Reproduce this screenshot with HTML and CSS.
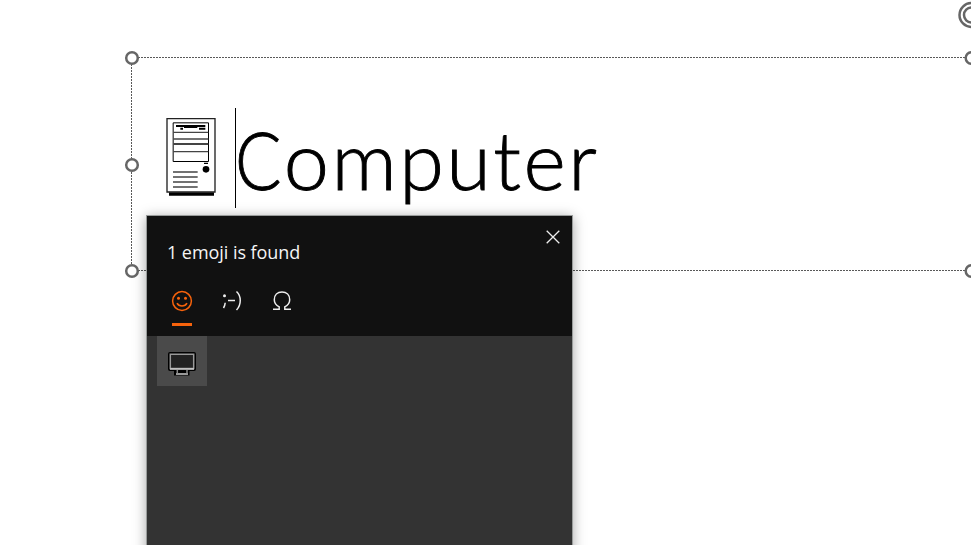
FILE: index.html
```html
<!DOCTYPE html>
<html lang="en">
<head>
<meta charset="utf-8">
<title>Computer</title>
<link rel="stylesheet" href="styles.css">
</head>
<body>
<main class="slide">
  <svg class="selection" width="971" height="545" viewBox="0 0 971 545" aria-hidden="true">
    <path class="outline" d="M132 57.5H971M131.500 58V270M132 270.500H971"/>
    <g class="handles">
      <circle cx="132" cy="58" r="5.800"/>
      <circle cx="132" cy="165" r="5.800"/>
      <circle cx="132" cy="271" r="5.800"/>
      <circle cx="971.500" cy="58" r="5.800"/>
      <circle cx="971.500" cy="271" r="5.800"/>
      <circle cx="971.500" cy="15" r="12"/>
      <circle cx="971.500" cy="15" r="7.500"/>
    </g>
  </svg>
  <section class="title">
    <svg class="tower" width="66" height="100" viewBox="48 24 198 300" aria-hidden="true">
      <path d="M57 277H192V287H57Z"/>
      <path class="case" d="M51 56H195V276H51Z"/>
      <path class="bay" d="M69.500 68.500H175.500V184.500H69.500Z"/>
      <path class="rule" d="M70 97H175M70 117H175M70 155H175M69 216H143M69 231H143M69 246H143M69 261H143"/>
      <path class="rule thick" d="M70 132H175"/>
      <path d="M78 75H166V81H142V84H102V81H78ZM91 83H99V89H91ZM147 83H166V89H147ZM162 188H174V192H162Z"/>
      <circle cx="168" cy="208" r="10"/>
    </svg>
    <span class="caret"></span>
    <h1><span class="cap">C</span>omputer</h1>
  </section>
  <aside class="picker">
    <header class="picker-head">
      <svg class="close" width="14" height="14" viewBox="0 0 14 14" aria-hidden="true"><path d="M.7.7 13.300 13.300M13.300.7.7 13.300"/></svg>
      <p class="result">1 emoji is found</p>
      <nav class="tabs">
        <span class="tab active">
          <svg width="22" height="22" viewBox="0 0 22 22" aria-hidden="true">
            <circle class="line" cx="11" cy="11" r="9.400"/>
            <path class="line" d="M6 13.200Q7.500 16 11 16T16 13.200"/>
            <circle class="eye" cx="7.500" cy="8.200" r="1.500"/>
            <circle class="eye" cx="14.500" cy="8.200" r="1.500"/>
          </svg>
        </span>
        <span class="tab">
          <svg width="22" height="22" viewBox="0 0 22 22" aria-hidden="true">
            <circle class="dot" cx="3.500" cy="5.700" r="1.500"/>
            <path class="line" d="M4.200 12.800Q4 15.500 2.500 18M7 10.500H14M15.500 1.500C20.500 6 20.500 15 15.500 20"/>
          </svg>
        </span>
        <span class="tab">
          <svg width="22" height="22" viewBox="0 0 22 22" aria-hidden="true">
            <path class="line" d="M2 19.200H8.200V16.800C5 15.200 3.300 12.800 3.300 9.700C3.300 5 6.500 2 11 2S18.700 5 18.700 9.700C18.700 12.800 17 15.200 13.800 16.800V19.200H20"/>
          </svg>
        </span>
      </nav>
    </header>
    <div class="grid">
      <div class="cell">
        <svg width="30" height="26" viewBox="0 0 30 26" aria-hidden="true">
          <path class="black" d="M3 1H27Q29 1 29 3V18Q29 20 27 20H22.500V24.500H7V20H3Q1 20 1 18V3Q1 1 3 1Z"/>
          <path class="screen" d="M3.300 3.300H26.700V17.500H3.300Z"/>
          <path class="light" d="M3 18H27M9 23H21"/>
          <path class="mid" d="M10.300 19V22.500M20 19V22.500"/>
        </svg>
      </div>
    </div>
  </aside>
</main>
</body>
</html>
```
FILE: styles.css
```css
* { box-sizing: border-box; margin: 0; }
body { background: #fff; overflow: hidden; }
.slide { position: relative; width: 971px; height: 545px; overflow: hidden; }
.selection { position: absolute; left: 0; top: 0; }
.outline { fill: none; stroke: #595959; stroke-width: 1; stroke-dasharray: 2 1; }
.handles circle { fill: #fff; stroke: #666; stroke-width: 2.5; }

.title { position: absolute; left: 166px; top: 108px; height: 100px; display: flex; }
.tower { display: block; }
.case, .bay { fill: #fff; stroke: #222; stroke-width: 4; }
.bay { stroke: #000; stroke-width: 3; }
.rule { fill: none; stroke: #444; stroke-width: 4; }
.thick { stroke-width: 6; }
.caret { width: 1px; height: 100px; background: #000; margin-left: 3px; }
h1 { font: 300 81px/100px Lato, sans-serif; color: #000; letter-spacing: 2.5px; margin: 1px 0 0 -1px; white-space: nowrap; -webkit-text-stroke: .9px #000; }
.cap { display: inline-block; transform: scaleX(.85); transform-origin: left; margin-right: -8.5px; }

.picker { position: absolute; left: 146px; top: 215px; width: 427px; height: 350px; border: 1px solid #999c9b; background: #333; box-shadow: 0 2px 12px rgba(0, 0, 0, .35); }
.picker-head { position: relative; height: 120px; background: #111; padding: 23px 21px 0 20px; }
.close { position: absolute; right: 12.5px; top: 13.5px; fill: none; stroke: #eee; stroke-width: 1.300; }
.result { font: 18px/26px "Open Sans", sans-serif; color: #f5f5f5; letter-spacing: -.05px; white-space: nowrap; }
.tabs { display: flex; gap: 28px; margin: 25px 0 0 4px; }
.tab { width: 22px; height: 36px; color: #eee; }
.tab svg { display: block; }
.active { color: #f7630c; position: relative; }
.active::after { content: ""; position: absolute; left: 1px; top: 33px; width: 20px; height: 3px; background: currentColor; }
.line { fill: none; stroke: currentColor; stroke-width: 1.500; }
.eye, .dot { fill: currentColor; }
.grid { padding-left: 10px; }
.cell { width: 50px; height: 50px; background: #4a4a4a; display: grid; place-items: center; padding-top: 5px; }
.black { fill: #000; }
.screen { fill: #222; stroke: #999; stroke-width: 1.500; }
.light, .mid { fill: none; stroke: #ccc; stroke-width: 1.500; }
.mid { stroke: #888; }
```
